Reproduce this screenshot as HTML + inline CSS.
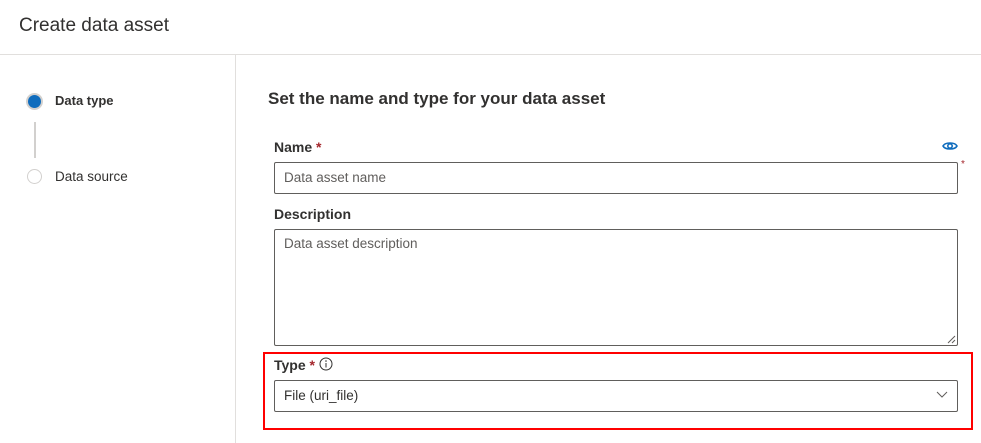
<!DOCTYPE html>
<html><head><style>
*{box-sizing:border-box;margin:0;padding:0}
body{width:981px;height:443px;overflow:hidden;background:#fff;font-family:"Segoe UI","Liberation Sans",sans-serif;color:#323130;position:relative}
.abs{position:absolute}
.hdr{left:19px;top:15px;font-size:19px;color:#323130}
.hline{left:0;top:54px;width:981px;height:1px;background:#e1dfdd}
.vline{left:235px;top:55px;width:1px;height:388px;background:#e1dfdd}
.lbl{font-size:14px;font-weight:600;color:#323130}
.req{color:#a4262c}
.box{border:1px solid #605e5c;border-radius:2px;left:274px;width:684px;font-size:13.5px;color:#605e5c;padding-left:9px}
</style></head><body>
<div class="abs hdr">Create data asset</div>
<div class="abs hline"></div>
<div class="abs vline"></div>

<div class="abs" style="left:28px;top:95px;width:13px;height:13px;border-radius:50%;background:#0f6cbd;box-shadow:0 0 0 2px #d2d0ce"></div>
<div class="abs lbl" style="left:55px;top:93px;font-size:13px;font-weight:700">Data type</div>
<div class="abs" style="left:34px;top:122px;width:2px;height:36px;background:#d2d0ce"></div>
<div class="abs" style="left:27px;top:169px;width:15px;height:15px;border-radius:50%;border:1.5px solid #d2d0ce"></div>
<div class="abs" style="left:55px;top:169px;font-size:13.5px">Data source</div>

<div class="abs" style="left:268px;top:89px;font-size:17px;font-weight:600;color:#323130">Set the name and type for your data asset</div>

<div class="abs lbl" style="left:274px;top:139px">Name <span class="req">*</span></div>
<svg class="abs" style="left:942px;top:140px" width="16" height="12" viewBox="0 0 16 12"><path d="M1 6C3 2 13 2 15 6C13 10 3 10 1 6Z" fill="none" stroke="#0f6cbd" stroke-width="1.6"/><circle cx="8" cy="6" r="2.2" fill="none" stroke="#0f6cbd" stroke-width="1.6"/></svg>
<div class="abs box" style="top:162px;height:32px;line-height:30px">Data asset name</div>
<div class="abs req" style="left:961px;top:159px;font-size:10px">*</div>

<div class="abs lbl" style="left:274px;top:206px">Description</div>
<div class="abs box" style="top:229px;height:117px;padding-top:6px">Data asset description</div>
<svg class="abs" style="left:946px;top:334px" width="10" height="10"><path d="M2 9L9 2M6 9L9 6" stroke="#605e5c" stroke-width="1"/></svg>

<div class="abs" style="left:263px;top:352px;width:710px;height:78px;border:2px solid #f00"></div>
<div class="abs lbl" style="left:274px;top:357px">Type <span class="req">*</span></div>
<svg class="abs" style="left:319px;top:357px" width="14" height="14"><circle cx="7" cy="7" r="6" fill="none" stroke="#323130" stroke-width="1"/><path d="M7 6v4.5" stroke="#323130"/><circle cx="7" cy="4" r="0.8" fill="#323130"/></svg>
<div class="abs box" style="top:380px;height:32px;line-height:30px;color:#323130">File (uri_file)</div>
<svg class="abs" style="left:936px;top:391px" width="12" height="8"><path d="M1 1L6 6L11 1" fill="none" stroke="#605e5c" stroke-width="1"/></svg>
</body></html>
